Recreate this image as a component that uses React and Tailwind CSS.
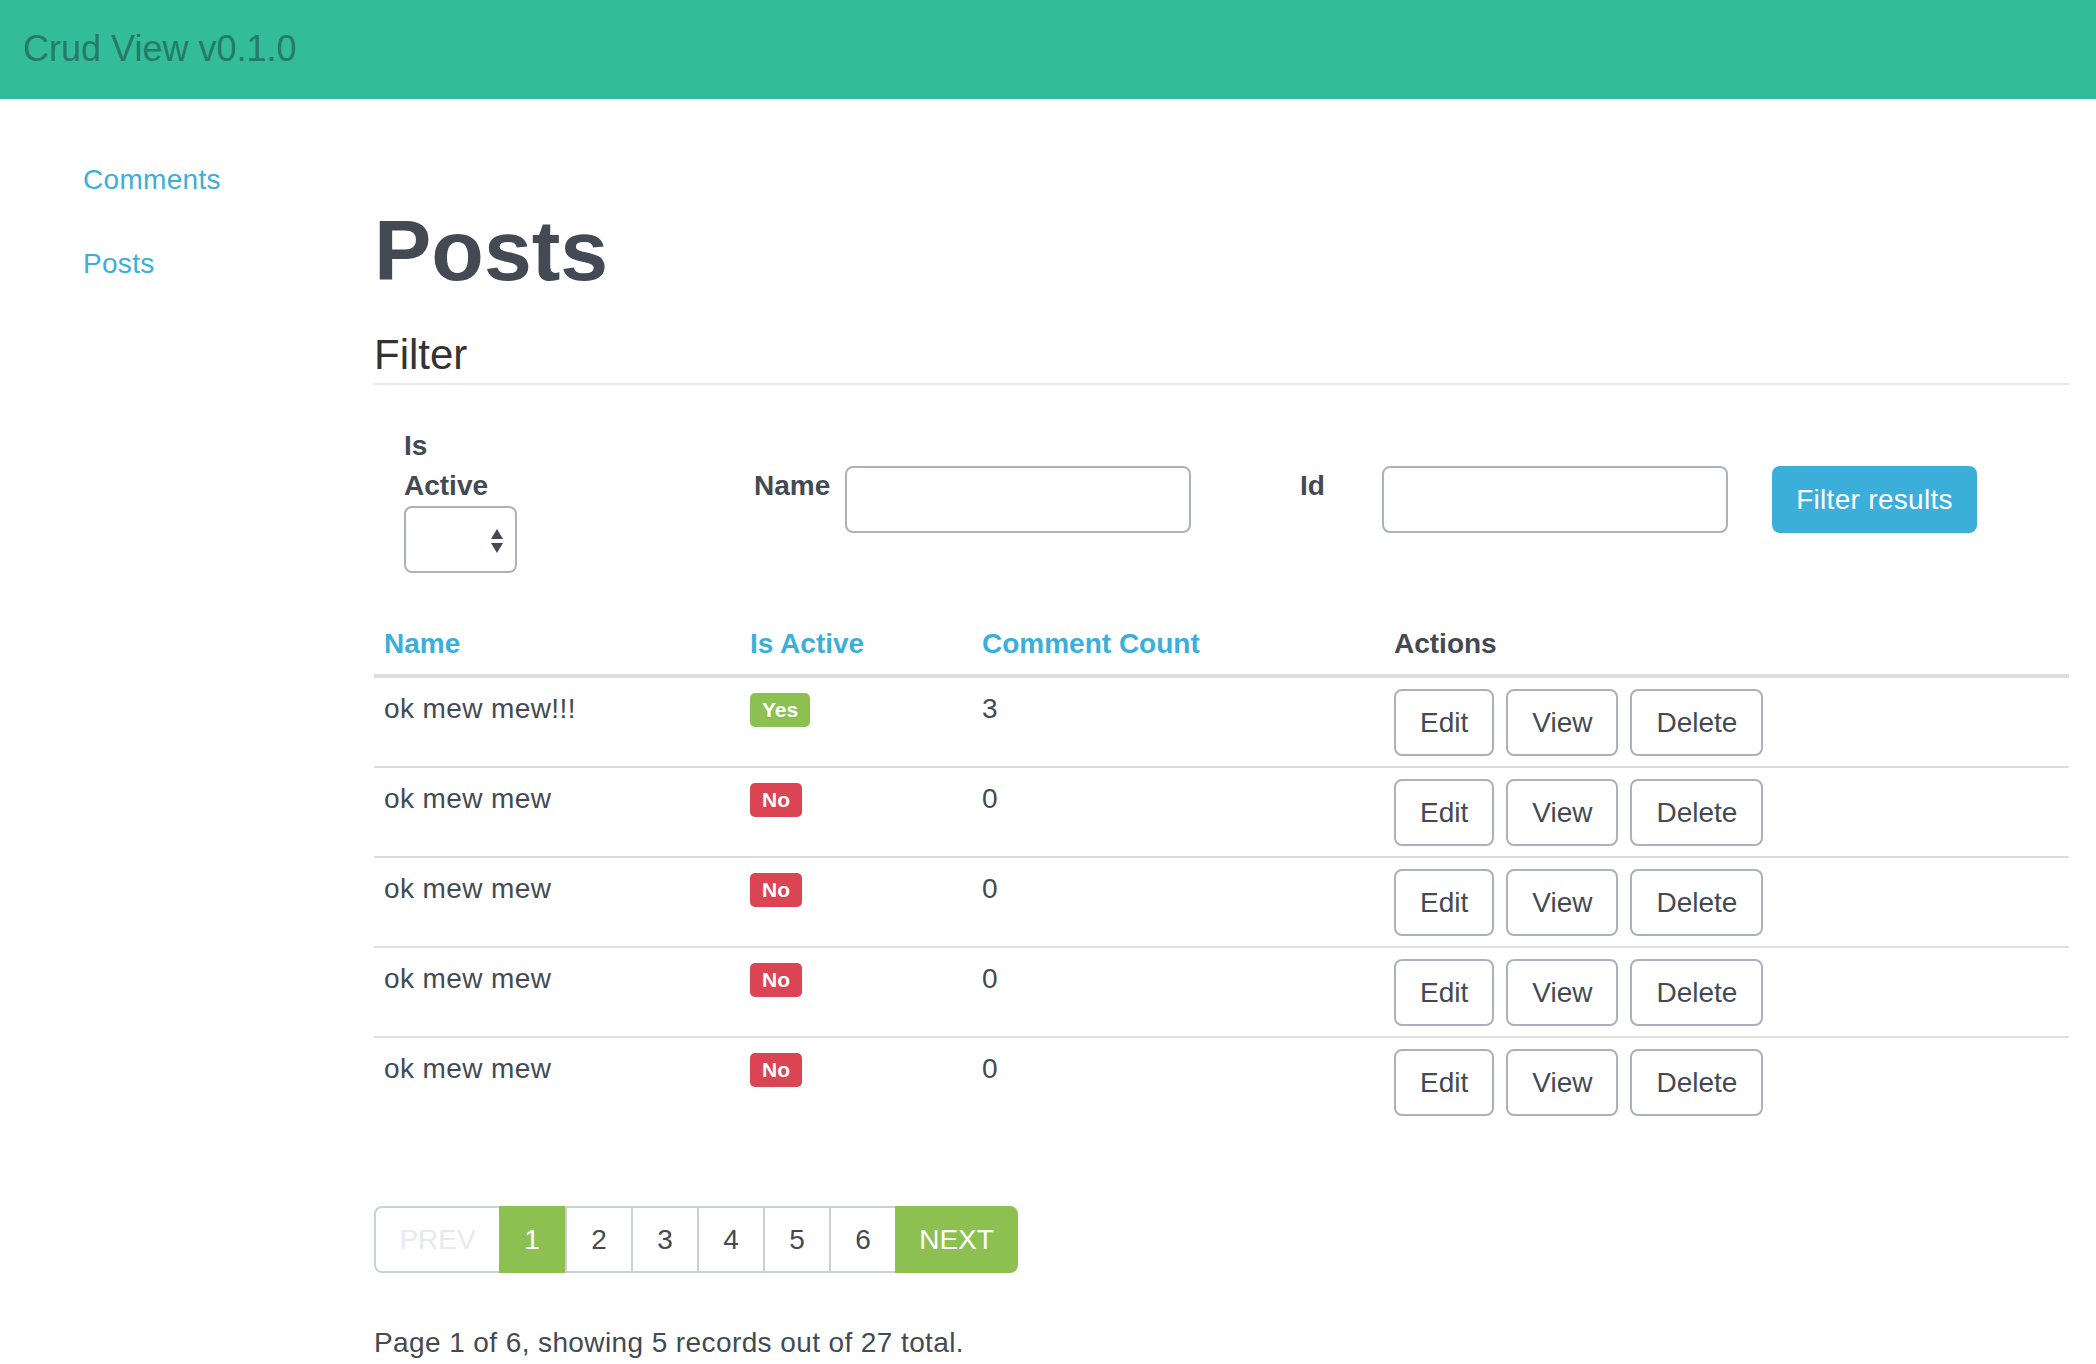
import React from 'react';

const rows = [
  { name: 'ok mew mew!!!', active: true, count: 3 },
  { name: 'ok mew mew', active: false, count: 0 },
  { name: 'ok mew mew', active: false, count: 0 },
  { name: 'ok mew mew', active: false, count: 0 },
  { name: 'ok mew mew', active: false, count: 0 },
];

const pages = ['1', '2', '3', '4', '5', '6'];

// Small outlined action button used in each table row
const ActionButton = ({ children }) => (
  <button className="h-[67px] px-[24px] border-2 border-[#aab2bd] rounded-[8px] bg-white text-[28px] leading-[40px] tracking-normal text-[#434a54]">
    {children}
  </button>
);

const App = () => {
  return (
    <div className="min-h-screen bg-white text-[#434a54] font-['Liberation_Sans',Arial,sans-serif]">
      {/* Top bar */}
      <header className="h-[99px] bg-[#33bc9a] flex items-center px-[23px] pb-[2px]">
        <span className="text-[36px] text-[#257b65]">Crud View v0.1.0</span>
      </header>

      <div className="flex">
        {/* Sidebar */}
        <nav className="w-[374px] shrink-0 pl-[83px] pt-[61px] flex flex-col gap-[44px]">
          <a className="text-[28px] leading-[40px] tracking-[0.3px] text-[#3bafda]">Comments</a>
          <a className="text-[28px] leading-[40px] tracking-[0.3px] text-[#3bafda]">Posts</a>
        </nav>

        {/* Main content */}
        <main className="flex-1 pr-[27px]">
          <h1 className="mt-[104px] text-[86px] leading-[95px] font-bold text-[#434a54]">Posts</h1>

          <h2 className="mt-[34px] pb-[5px] border-b-2 border-[#e6e9ed] text-[42px] leading-[46px] text-[#333]">
            Filter
          </h2>

          {/* Filter form */}
          <div className="mt-[41px] pl-[30px] flex items-center">
            <div className="w-[350px] shrink-0">
              <label className="block w-[90px] text-[28px] leading-[40px] font-bold">Is Active</label>
              <div className="relative w-[113px] h-[67px] border-2 border-[#aab2bd] rounded-[8px]">
                <svg className="absolute right-[12px] top-[21px]" width="12" height="24" viewBox="0 0 12 24">
                  <path d="M6 0 L12 10 L0 10 Z" fill="#434a54" />
                  <path d="M0 14 L12 14 L6 24 Z" fill="#434a54" />
                </svg>
              </div>
            </div>

            <div className="w-[546px] shrink-0 flex items-start">
              <label className="w-[91px] shrink-0 text-[28px] leading-[40px] font-bold">Name</label>
              <input className="w-[346px] h-[67px] border-2 border-[#aab2bd] rounded-[8px] outline-none" />
            </div>

            <div className="w-[472px] shrink-0 flex items-start">
              <label className="w-[82px] shrink-0 text-[28px] leading-[40px] font-bold">Id</label>
              <input className="w-[346px] h-[67px] border-2 border-[#aab2bd] rounded-[8px] outline-none" />
            </div>

            <button className="w-[205px] h-[67px] bg-[#3bafda] text-white text-[28px] tracking-[0.3px] rounded-[8px]">
              Filter results
            </button>
          </div>

          {/* Results table */}
          <table className="mt-[40px] w-full table-fixed border-collapse text-[28px] leading-[40px]">
            <colgroup>
              <col className="w-[366px]" />
              <col className="w-[232px]" />
              <col className="w-[412px]" />
              <col />
            </colgroup>
            <thead>
              <tr className="border-b-4 border-[#dddddd]">
                <th className="px-[10px] pt-[11px] pb-[10px] text-left font-bold text-[#3bafda]">Name</th>
                <th className="px-[10px] pt-[11px] pb-[10px] text-left font-bold text-[#3bafda]">Is Active</th>
                <th className="px-[10px] pt-[11px] pb-[10px] text-left font-bold text-[#3bafda]">Comment Count</th>
                <th className="px-[10px] pt-[11px] pb-[10px] text-left font-bold text-[#434a54]">Actions</th>
              </tr>
            </thead>
            <tbody className="tracking-[0.4px]">
              {rows.map((row, i) => (
                <tr key={i} className={i < rows.length - 1 ? 'border-b-2 border-[#dddddd]' : ''}>
                  <td className="px-[10px] pt-[11px] pb-[10px] align-top">{row.name}</td>
                  <td className="px-[10px] pt-[11px] pb-[10px] align-top">
                    {row.active ? (
                      <span className="inline-block mt-[4px] h-[34px] px-[12px] rounded-[5px] bg-[#8cc152] text-white text-[21px] leading-[34px] font-bold tracking-normal align-top">
                        Yes
                      </span>
                    ) : (
                      <span className="inline-block mt-[4px] h-[34px] px-[12px] rounded-[5px] bg-[#da4453] text-white text-[21px] leading-[34px] font-bold tracking-normal align-top">
                        No
                      </span>
                    )}
                  </td>
                  <td className="px-[10px] pt-[11px] pb-[10px] align-top">{row.count}</td>
                  <td className="px-[10px] pt-[11px] pb-[10px] align-top">
                    <div className="flex gap-[12px]">
                      <ActionButton>Edit</ActionButton>
                      <ActionButton>View</ActionButton>
                      <ActionButton>Delete</ActionButton>
                    </div>
                  </td>
                </tr>
              ))}
            </tbody>
          </table>

          {/* Pagination */}
          <div className="mt-[80px] flex text-[28px] leading-[40px]">
            <span className="h-[67px] w-[125px] flex items-center justify-center border-2 border-r-0 border-[#ccd1d9] rounded-l-[8px] text-[#e6e9ed]">
              PREV
            </span>
            {pages.map((p) => (
              p === '1' ? (
                <span key={p} className="h-[67px] w-[66px] flex items-center justify-center bg-[#8cc152] text-white">
                  {p}
                </span>
              ) : (
                <span key={p} className="h-[67px] w-[66px] flex items-center justify-center border-y-2 border-l-2 border-[#ccd1d9] text-[#434a54]">
                  {p}
                </span>
              )
            ))}
            <span className="h-[67px] w-[123px] flex items-center justify-center bg-[#8cc152] rounded-r-[8px] text-white">
              NEXT
            </span>
          </div>

          <p className="mt-[50px] text-[28px] leading-[40px] tracking-[0.4px] text-[#434a54]">
            Page 1 of 6, showing 5 records out of 27 total.
          </p>
        </main>
      </div>
    </div>
  );
};

export default App;
